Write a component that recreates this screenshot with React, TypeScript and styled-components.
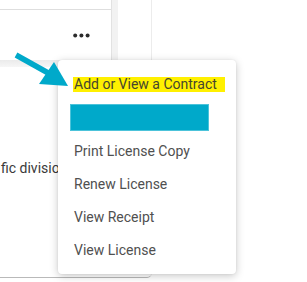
import React from "react";
import styled, { createGlobalStyle } from "styled-components";

const Global = createGlobalStyle`
  html, body { margin: 0; padding: 0; background: #fff; }
  body { font-family: Roboto, "Liberation Sans", sans-serif; overflow: hidden; }
`;

const Page = styled.div`
  position: relative;
  width: 307px;
  height: 282px;
  overflow: hidden;
  background: #fff;
`;

const Card = styled.div`
  width: 152px;
  height: 278px;
  box-sizing: border-box;
  border-right: 1px solid #ececec;
  border-bottom: 1px solid #b9b9b9;
  border-bottom-right-radius: 5px;
  display: flex;
  flex-direction: column;
`;

const TopRow = styled.div`
  display: grid;
  grid-template-columns: 111px 7px 1fr;
  height: 60px;
  flex-shrink: 0;
`;

const ActionCell = styled.div`
  margin-top: 9px;
  border-top: 1px solid #dedede;
  display: flex;
  align-items: center;
  justify-content: flex-end;
  padding-right: 21px;
`;

const Divider = styled.div`
  background: #f2f2f2;
  border-left: 1px solid #e2e2e2;
`;

const Band = styled.div`
  height: 7px;
  flex-shrink: 0;
  background: linear-gradient(#ebebeb, #f6f6f6);
`;

const Body = styled.div`
  padding-top: 93px;
  font-size: 14px;
  line-height: 16px;
  color: #3a3a3a;
  white-space: nowrap;
  padding-left: 1px;
`;

const Menu = styled.ul`
  position: absolute;
  left: 58px;
  top: 60px;
  width: 178px;
  margin: 0;
  padding: 8px 0;
  list-style: none;
  background: #fff;
  border-radius: 4px;
  box-shadow: 0 2px 8px rgba(0, 0, 0, 0.22), 0 0 2px rgba(0, 0, 0, 0.08);
`;

const Item = styled.li`
  height: 33px;
  display: flex;
  align-items: center;
  padding-left: 16px;
  font-size: 14px;
  color: #505050;
`;

const Highlight = styled.span`
  display: inline-block;
  background: #fff000;
  line-height: 15px;
  padding: 0 8px 0 1px;
  margin-left: -1px;
  color: #45452f;
`;

const Redacted = styled.div`
  margin-left: -4px;
  width: 139px;
  height: 27px;
  box-sizing: border-box;
  background: #00a9ca;
  border: 1px solid #4cc3da;
`;

const Arrow = styled.svg`
  position: absolute;
  left: 0;
  top: 0;
  pointer-events: none;
`;

const Dots = () => (
  <svg width="17" height="5" viewBox="0 0 17 5">
    <circle cx="2.2" cy="2.5" r="2" fill="#2b2b2b" />
    <circle cx="8.4" cy="2.5" r="2" fill="#2b2b2b" />
    <circle cx="14.6" cy="2.5" r="2" fill="#2b2b2b" />
  </svg>
);

export default function App() {
  return (
    <>
      <Global />
      <Page>
        <Card>
          <TopRow>
            <ActionCell>
              <Dots />
            </ActionCell>
            <Divider />
            <div />
          </TopRow>
          <Band />
          <Body>fic division</Body>
        </Card>
        <Menu>
          <Item>
            <Highlight>Add or View a Contract</Highlight>
          </Item>
          <Item>
            <Redacted />
          </Item>
          <Item>Print License Copy</Item>
          <Item>Renew License</Item>
          <Item>View Receipt</Item>
          <Item>View License</Item>
        </Menu>
        <Arrow width="307" height="282" viewBox="0 0 307 282">
          <line x1="16" y1="55" x2="50" y2="74" stroke="#00a9ca" strokeWidth="5.5" />
          <polygon points="39,84 54,62 68,86" fill="#00a9ca" />
        </Arrow>
      </Page>
    </>
  );
}
